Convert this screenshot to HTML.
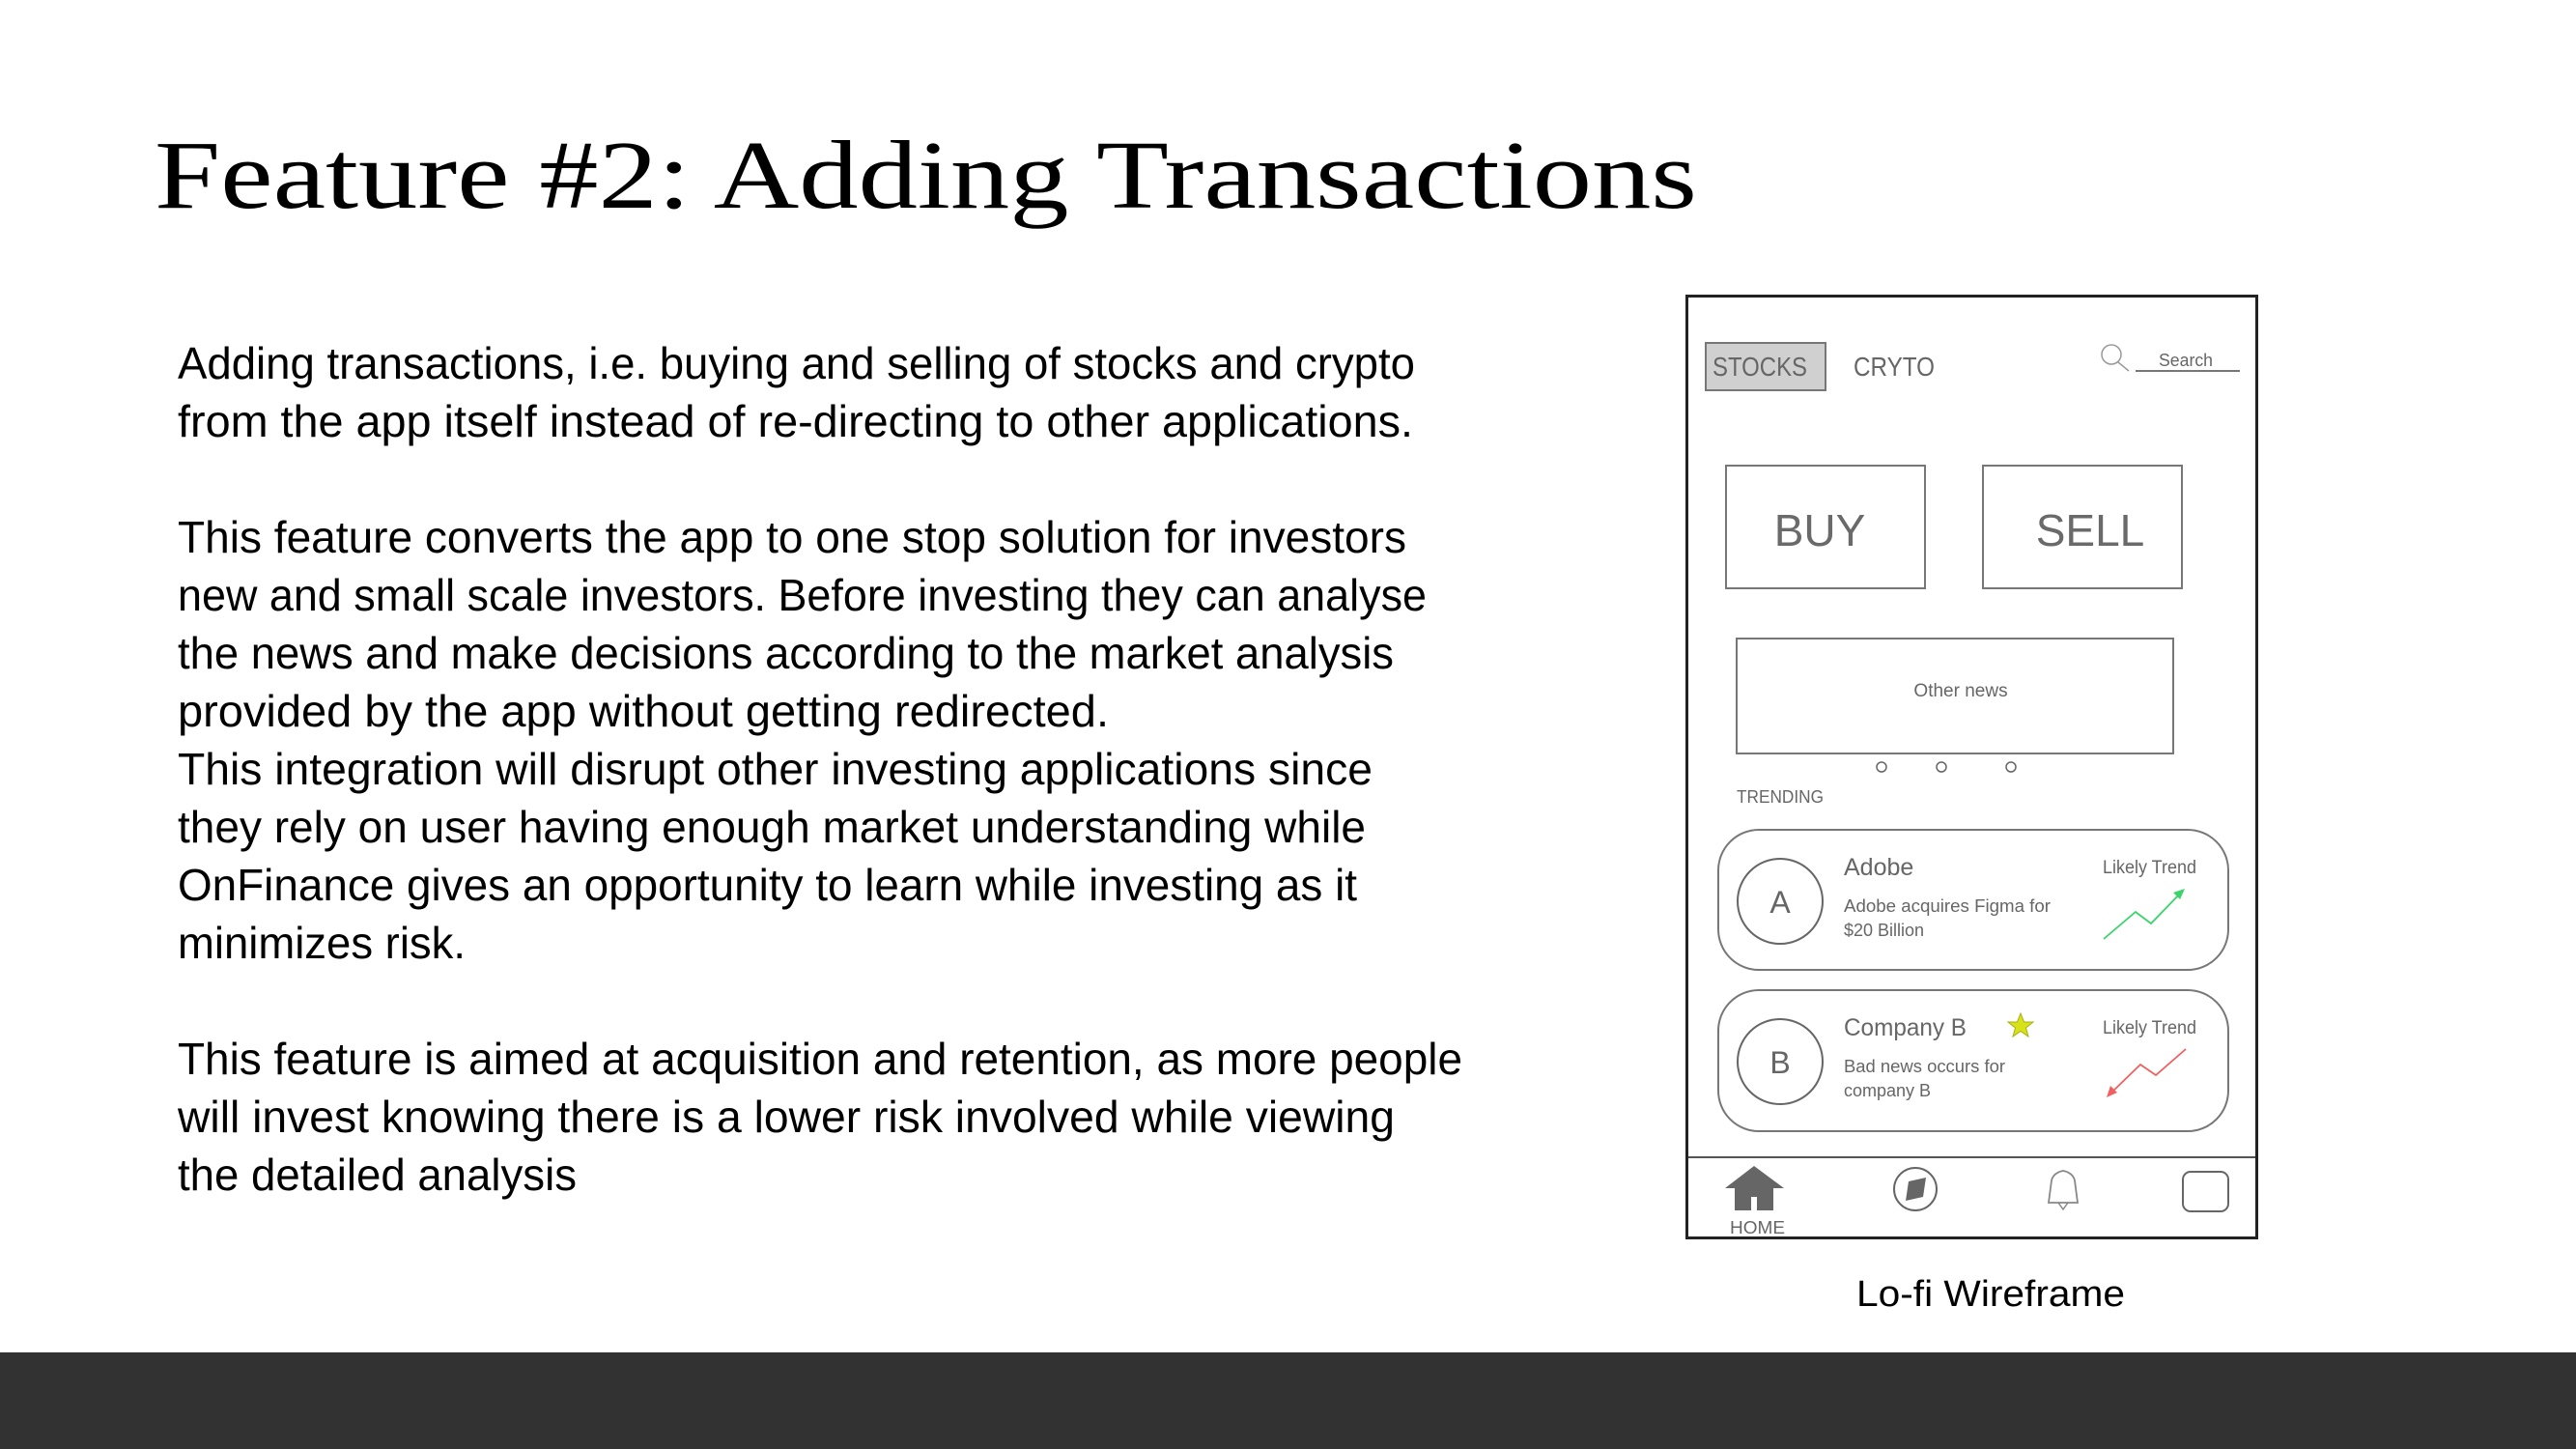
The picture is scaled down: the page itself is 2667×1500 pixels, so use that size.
<!DOCTYPE html>
<html><head><meta charset="utf-8"><style>
html,body{margin:0;padding:0;background:#fff;}
body{width:2667px;height:1500px;position:relative;overflow:hidden;}
svg{position:absolute;left:0;top:0;}
</style></head><body>
<svg width="2667" height="1500" viewBox="0 0 2667 1500" xmlns="http://www.w3.org/2000/svg">
<rect x="0" y="1400" width="2667" height="100" fill="#323232"/>
<text x="160" y="215" font-family="Liberation Serif, serif" font-size="101" fill="#000" textLength="1597" lengthAdjust="spacingAndGlyphs">Feature #2: Adding Transactions</text>
<g font-family="Liberation Sans, sans-serif" font-size="46" fill="#000" lengthAdjust="spacingAndGlyphs">
<text x="184" y="392" textLength="1281" lengthAdjust="spacingAndGlyphs">Adding transactions, i.e. buying and selling of stocks and crypto</text>
<text x="184" y="452" textLength="1279" lengthAdjust="spacingAndGlyphs">from the app itself instead of re-directing to other applications.</text>
<text x="184" y="572" textLength="1272" lengthAdjust="spacingAndGlyphs">This feature converts the app to one stop solution for investors</text>
<text x="184" y="632" textLength="1293" lengthAdjust="spacingAndGlyphs">new and small scale investors. Before investing they can analyse</text>
<text x="184" y="692" textLength="1259" lengthAdjust="spacingAndGlyphs">the news and make decisions according to the market analysis</text>
<text x="184" y="752" textLength="964" lengthAdjust="spacingAndGlyphs">provided by the app without getting redirected.</text>
<text x="184" y="812" textLength="1237" lengthAdjust="spacingAndGlyphs">This integration will disrupt other investing applications since</text>
<text x="184" y="872" textLength="1230" lengthAdjust="spacingAndGlyphs">they rely on user having enough market understanding while</text>
<text x="184" y="932" textLength="1221" lengthAdjust="spacingAndGlyphs">OnFinance gives an opportunity to learn while investing as it</text>
<text x="184" y="992" textLength="298" lengthAdjust="spacingAndGlyphs">minimizes risk.</text>
<text x="184" y="1112" textLength="1330" lengthAdjust="spacingAndGlyphs">This feature is aimed at acquisition and retention, as more people</text>
<text x="184" y="1172" textLength="1260" lengthAdjust="spacingAndGlyphs">will invest knowing there is a lower risk involved while viewing</text>
<text x="184" y="1232" textLength="413" lengthAdjust="spacingAndGlyphs">the detailed analysis</text>
</g>
<text x="1922" y="1352" font-family="Liberation Sans, sans-serif" font-size="38" fill="#000" textLength="278" lengthAdjust="spacingAndGlyphs">Lo-fi Wireframe</text>

<rect x="1746.5" y="306.5" width="590" height="975" fill="#fff" stroke="#222" stroke-width="3"/>
<g font-family="Liberation Sans, sans-serif" fill="#666">
<rect x="1766" y="355" width="124" height="49" fill="#d0d0d0" stroke="#777" stroke-width="2"/>
<text x="1773" y="389" font-size="28" textLength="98" lengthAdjust="spacingAndGlyphs">STOCKS</text>
<text x="1919" y="389" font-size="28" textLength="84" lengthAdjust="spacingAndGlyphs">CRYTO</text>
<circle cx="2186" cy="367" r="10" fill="none" stroke="#999" stroke-width="1.5"/>
<line x1="2193" y1="375" x2="2204" y2="384" stroke="#999" stroke-width="1.5"/>
<text x="2235" y="379" font-size="18" textLength="56" lengthAdjust="spacingAndGlyphs">Search</text>
<line x1="2211" y1="384" x2="2319" y2="384" stroke="#777" stroke-width="2"/>

<rect x="1787" y="482" width="206" height="127" fill="none" stroke="#777" stroke-width="2"/>
<rect x="2053" y="482" width="206" height="127" fill="none" stroke="#777" stroke-width="2"/>
<text x="1884" y="565" font-size="46" text-anchor="middle" fill="#6a6a6a">BUY</text>
<text x="2164" y="565" font-size="46" text-anchor="middle" fill="#6a6a6a">SELL</text>

<rect x="1798" y="661" width="452" height="119" fill="none" stroke="#777" stroke-width="2"/>
<text x="2030" y="721" font-size="19" text-anchor="middle">Other news</text>
<circle cx="1948" cy="794" r="5" fill="none" stroke="#666" stroke-width="1.5"/>
<circle cx="2010" cy="794" r="5" fill="none" stroke="#666" stroke-width="1.5"/>
<circle cx="2082" cy="794" r="5" fill="none" stroke="#666" stroke-width="1.5"/>

<text x="1798" y="831" font-size="18" textLength="90" lengthAdjust="spacingAndGlyphs">TRENDING</text>

<rect x="1779" y="859" width="528" height="145" rx="42" fill="none" stroke="#777" stroke-width="2"/>
<circle cx="1843" cy="933" r="44" fill="none" stroke="#666" stroke-width="2"/>
<text x="1843" y="945" font-size="32" text-anchor="middle">A</text>
<text x="1909" y="906" font-size="25">Adobe</text>
<text x="1909" y="944" font-size="18" textLength="214" lengthAdjust="spacingAndGlyphs">Adobe acquires Figma for</text>
<text x="1909" y="969" font-size="18">$20 Billion</text>
<text x="2177" y="904" font-size="19" textLength="97" lengthAdjust="spacingAndGlyphs">Likely Trend</text>
<polyline points="2178,972 2211,944 2227,956 2259,923" fill="none" stroke="#3ad46b" stroke-width="1.8"/>
<polygon points="2262,920 2250,924 2257,931" fill="#3ad46b"/>

<rect x="1779" y="1025" width="528" height="146" rx="42" fill="none" stroke="#777" stroke-width="2"/>
<circle cx="1843" cy="1099" r="44" fill="none" stroke="#666" stroke-width="2"/>
<text x="1843" y="1111" font-size="32" text-anchor="middle">B</text>
<text x="1909" y="1072" font-size="25" textLength="127" lengthAdjust="spacingAndGlyphs">Company B</text>
<polygon points="2092,1049 2095.5,1058 2105,1058 2097.5,1064 2100,1073 2092,1067.5 2084,1073 2086.5,1064 2079,1058 2088.5,1058" fill="#d8e21a" stroke="#a8b010" stroke-width="1"/>
<text x="1909" y="1110" font-size="18" textLength="167" lengthAdjust="spacingAndGlyphs">Bad news occurs for</text>
<text x="1909" y="1135" font-size="18">company B</text>
<text x="2177" y="1070" font-size="19" textLength="97" lengthAdjust="spacingAndGlyphs">Likely Trend</text>
<polyline points="2184,1133 2216,1102 2232,1113 2263,1086" fill="none" stroke="#f06060" stroke-width="1.8"/>
<polygon points="2181,1136 2185,1124 2192,1131" fill="#f06060"/>

<line x1="1748" y1="1198" x2="2335" y2="1198" stroke="#555" stroke-width="2"/>
<polygon points="1816,1207 1847,1230 1836,1230 1836,1253 1796,1253 1796,1230 1786,1230" fill="#666"/>
<rect x="1813" y="1239" width="6" height="14" fill="#fff"/>
<text x="1791" y="1277" font-size="18" textLength="57" lengthAdjust="spacingAndGlyphs">HOME</text>
<circle cx="1983" cy="1231" r="22" fill="none" stroke="#666" stroke-width="2"/>
<polygon points="1973,1243 1976,1223 1994,1219 1991,1239" fill="#666"/>
<path d="M2121,1245 L2124,1222 Q2126,1214 2136,1212 Q2146,1214 2148,1222 L2151,1245 Z" fill="none" stroke="#888" stroke-width="1.8"/>
<path d="M2131,1245 L2136,1252 L2141,1245" fill="none" stroke="#888" stroke-width="1.5"/>
<rect x="2260" y="1213" width="47" height="41" rx="8" fill="none" stroke="#666" stroke-width="2"/>
</g>
</svg>
</body></html>
